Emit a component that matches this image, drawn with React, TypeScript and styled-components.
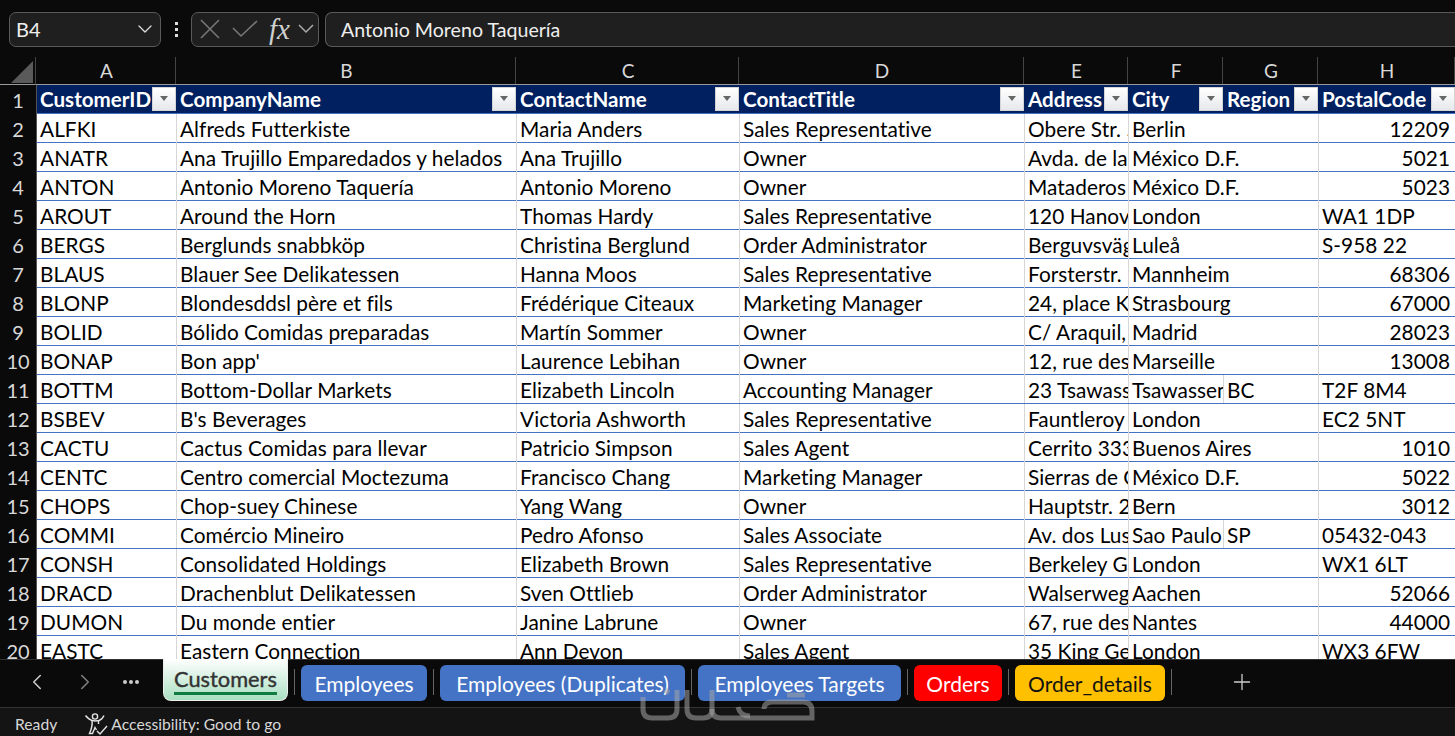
import { createGlobalStyle, styled } from 'styled-components'
import { ChevronDown, ChevronLeft, ChevronRight, Plus } from 'lucide-react'

const COLUMNS = [
	{ letter: 'A', name: 'CustomerID', width: 140 },
	{ letter: 'B', name: 'CompanyName', width: 340 },
	{ letter: 'C', name: 'ContactName', width: 223 },
	{ letter: 'D', name: 'ContactTitle', width: 285 },
	{ letter: 'E', name: 'Address', width: 104 },
	{ letter: 'F', name: 'City', width: 95 },
	{ letter: 'G', name: 'Region', width: 95 },
	{ letter: 'H', name: 'PostalCode', width: 137 },
]

const GRID_COLUMNS = COLUMNS.map((c) => `${c.width}px`).join(' ')

const ROWS = [
	['ALFKI', 'Alfreds Futterkiste', 'Maria Anders', 'Sales Representative', 'Obere Str. 57', 'Berlin', '', '12209'],
	['ANATR', 'Ana Trujillo Emparedados y helados', 'Ana Trujillo', 'Owner', 'Avda. de la Constitución', 'México D.F.', '', '5021'],
	['ANTON', 'Antonio Moreno Taquería', 'Antonio Moreno', 'Owner', 'Mataderos 2312', 'México D.F.', '', '5023'],
	['AROUT', 'Around the Horn', 'Thomas Hardy', 'Sales Representative', '120 Hanover Sq.', 'London', '', 'WA1 1DP'],
	['BERGS', 'Berglunds snabbköp', 'Christina Berglund', 'Order Administrator', 'Berguvsvägen 8', 'Luleå', '', 'S-958 22'],
	['BLAUS', 'Blauer See Delikatessen', 'Hanna Moos', 'Sales Representative', 'Forsterstr. 57', 'Mannheim', '', '68306'],
	['BLONP', 'Blondesddsl père et fils', 'Frédérique Citeaux', 'Marketing Manager', '24, place Kléber', 'Strasbourg', '', '67000'],
	['BOLID', 'Bólido Comidas preparadas', 'Martín Sommer', 'Owner', 'C/ Araquil, 67', 'Madrid', '', '28023'],
	['BONAP', "Bon app'", 'Laurence Lebihan', 'Owner', '12, rue des Bouchers', 'Marseille', '', '13008'],
	['BOTTM', 'Bottom-Dollar Markets', 'Elizabeth Lincoln', 'Accounting Manager', '23 Tsawassen Blvd.', 'Tsawassen', 'BC', 'T2F 8M4'],
	['BSBEV', "B's Beverages", 'Victoria Ashworth', 'Sales Representative', 'Fauntleroy Circus', 'London', '', 'EC2 5NT'],
	['CACTU', 'Cactus Comidas para llevar', 'Patricio Simpson', 'Sales Agent', 'Cerrito 333', 'Buenos Aires', '', '1010'],
	['CENTC', 'Centro comercial Moctezuma', 'Francisco Chang', 'Marketing Manager', 'Sierras de Granada 9993', 'México D.F.', '', '5022'],
	['CHOPS', 'Chop-suey Chinese', 'Yang Wang', 'Owner', 'Hauptstr. 29', 'Bern', '', '3012'],
	['COMMI', 'Comércio Mineiro', 'Pedro Afonso', 'Sales Associate', 'Av. dos Lusíadas, 23', 'Sao Paulo', 'SP', '05432-043'],
	['CONSH', 'Consolidated Holdings', 'Elizabeth Brown', 'Sales Representative', 'Berkeley Gardens', 'London', '', 'WX1 6LT'],
	['DRACD', 'Drachenblut Delikatessen', 'Sven Ottlieb', 'Order Administrator', 'Walserweg 21', 'Aachen', '', '52066'],
	['DUMON', 'Du monde entier', 'Janine Labrune', 'Owner', '67, rue des Cinquante', 'Nantes', '', '44000'],
	['EASTC', 'Eastern Connection', 'Ann Devon', 'Sales Agent', '35 King George', 'London', '', 'WX3 6FW'],
]

const TABS = [
	{ label: 'Employees', color: '#4472c4', ink: '#fff', width: 126 },
	{ label: 'Employees (Duplicates)', color: '#4472c4', ink: '#fff', width: 245 },
	{ label: 'Employees Targets', color: '#4472c4', ink: '#fff', width: 203 },
	{ label: 'Orders', color: '#ff0000', ink: '#fff', width: 88 },
	{ label: 'Order_details', color: '#ffc000', ink: '#111', width: 150 },
]

const isNumeric = (v: string) => /^\d+$/.test(v)

const App = () => (
	<Page>
		<GlobalStyle />
		<FormulaBar>
			<NameBox>
				<span>B4</span>
				<ChevronDown size={24} strokeWidth={1.3} color='#ddd' />
			</NameBox>
			<Grip>
				<i />
				<i />
				<i />
			</Grip>
			<FxBox>
				<svg width='22' height='22' viewBox='0 0 22 22' stroke='#777' strokeWidth='1.6' fill='none'>
					<path d='M2 2L20 20M20 2L2 20' />
				</svg>
				<svg width='26' height='18' viewBox='0 0 26 18' stroke='#777' strokeWidth='1.6' fill='none'>
					<path d='M1 8L9 16L25 1' />
				</svg>
				<FxGlyph>fx</FxGlyph>
				<svg width='18' height='10' viewBox='0 0 18 10' stroke='#aaa' strokeWidth='1.5' fill='none'>
					<path d='M2 1L9 8L16 1' />
				</svg>
			</FxBox>
			<FormulaInput>Antonio Moreno Taquería</FormulaInput>
		</FormulaBar>
		<ColumnHeads>
			<Corner>
				<svg width='22' height='22' viewBox='0 0 22 22'>
					<path d='M22 0V22H0Z' fill='#5a5a5a' />
				</svg>
			</Corner>
			<HeadCells>
				{COLUMNS.map((c) => (
					<HeadCell key={c.letter}>{c.letter}</HeadCell>
				))}
			</HeadCells>
		</ColumnHeads>
		<Sheet>
			<RowNumbers>
				<RowNumber>1</RowNumber>
				{ROWS.map((_, i) => (
					<RowNumber key={i}>{i + 2}</RowNumber>
				))}
			</RowNumbers>
			<Table>
				<TitleRow>
					{COLUMNS.map((c) => (
						<TitleCell key={c.letter}>
							<span>{c.name}</span>
							<FilterButton>
								<svg width='10' height='6' viewBox='0 0 10 6'>
									<path d='M1 0H9L5 5Z' fill='#666' />
								</svg>
							</FilterButton>
						</TitleCell>
					))}
				</TitleRow>
				{ROWS.map((row) => (
					<DataRow key={row[0]}>
						{row.map((v, i) => (
							<DataCell key={i} $right={isNumeric(v)} $spill={v !== '' && row[i + 1] === ''}>
								{v}
							</DataCell>
						))}
					</DataRow>
				))}
			</Table>
		</Sheet>
		<TabBar>
			<TabNav>
				<ChevronLeft size={26} strokeWidth={1.4} color='#ccc' />
				<ChevronRight size={26} strokeWidth={1.4} color='#808080' />
				<NavDots>
					<i />
					<i />
					<i />
				</NavDots>
			</TabNav>
			<ActiveTab>
				<span>Customers</span>
			</ActiveTab>
			{TABS.map((t) => (
				<TabSlot key={t.label}>
					<Separator />
					<ColorTab $color={t.color} $ink={t.ink} $width={t.width}>
						{t.label}
					</ColorTab>
				</TabSlot>
			))}
			<Separator />
			<AddTab>
				<Plus size={26} strokeWidth={1.2} color='#ccc' />
			</AddTab>
		</TabBar>
		<StatusBar>
			<span>Ready</span>
			<StatusItem>
				<svg width='24' height='24' viewBox='0 0 24 24' fill='none' stroke='#e4e4e4' strokeWidth='1.4'>
					<circle cx='11' cy='4.5' r='2.6' />
					<path d='M1.5 3.5C4 6.5 6 8 8 8.5C10 9 13 9 15 8.5C17 8 18.5 6.5 20 3.5' />
					<path d='M8 8.5C8.5 12 8 16 5.5 21.5H8.5L11 15.5L12.5 18' />
					<path d='M14.5 8.8V12' />
					<path d='M13 19L16 22L23 14' />
				</svg>
				<span>Accessibility: Good to go</span>
			</StatusItem>
			<Watermark width='176' height='36' viewBox='0 0 176 36' fill='none' stroke='rgba(165,165,165,0.55)' strokeWidth='5'>
				<path d='M3 10V22Q3 31 12 31H28Q37 31 37 22V3' />
				<path d='M47 3V22Q47 31 56 31H63Q72 31 72 22V3' />
				<path d='M72 22Q72 31 81 31H172V24Q172 15 163 15H133Q124 15 124 22' />
				<path d='M98 20Q100 29 110 29' />
				<path d='M147 8H165' />
				<path d='M25 3L29 6' />
			</Watermark>
		</StatusBar>
	</Page>
)

export default App

const GlobalStyle = createGlobalStyle`
	html, body {
		margin: 0;
		height: 100%;
		background: #0a0a0a;
		overflow: hidden;
	}
	body, button {
		font-family: Lato, "Liberation Sans", sans-serif;
		font-variant-ligatures: none;
	}
	* {
		box-sizing: border-box;
	}
`

const Page = styled.div`
	display: flex;
	flex-direction: column;
	width: 1455px;
	height: 736px;
	overflow: hidden;
	background: #0a0a0a;
`

const FormulaBar = styled.div`
	display: flex;
	align-items: center;
	height: 57px;
	padding: 1px 0 0 9px;
	flex-shrink: 0;
`

const NameBox = styled.div`
	display: flex;
	align-items: center;
	justify-content: space-between;
	width: 152px;
	height: 35px;
	padding: 0 3px 0 6px;
	border: 1px solid #5a5a5a;
	border-radius: 7px;
	background: #1f1f1f;
	color: #eee;
	font-size: 20px;
`

const Grip = styled.div`
	display: flex;
	flex-direction: column;
	gap: 3px;
	width: 30px;
	align-items: center;
	i {
		width: 3px;
		height: 3px;
		background: #ddd;
	}
`

const FxBox = styled.div`
	display: flex;
	align-items: center;
	width: 128px;
	height: 35px;
	padding: 0 2px 0 7px;
	gap: 11px;
	border: 1px solid #5a5a5a;
	border-radius: 7px;
	background: #1f1f1f;
`

const FxGlyph = styled.span`
	width: 22px;
	font-family: 'Liberation Serif', serif;
	font-style: italic;
	font-size: 29px;
	line-height: 30px;
	color: #d0d0d0;
	margin-right: -5px;
`

const FormulaInput = styled.div`
	flex: 1;
	height: 35px;
	margin-left: 6px;
	padding-left: 15px;
	border: 1px solid #5a5a5a;
	border-right: 0;
	border-radius: 7px 0 0 7px;
	background: #1f1f1f;
	color: #eee;
	font-size: 19.6px;
	line-height: 33px;
`

const ColumnHeads = styled.div`
	display: flex;
	height: 28px;
	flex-shrink: 0;
`

const Corner = styled.div`
	display: flex;
	align-items: flex-end;
	justify-content: flex-end;
	width: 37px;
	padding: 0 2px 1px 0;
	border-right: 1px solid #444;
	border-bottom: 1px solid #9a9a9a;
`

const HeadCells = styled.div`
	display: grid;
	grid-template-columns: ${GRID_COLUMNS};
	border-bottom: 1px solid #9a9a9a;
`

const HeadCell = styled.div`
	display: flex;
	align-items: center;
	justify-content: center;
	padding-left: 2px;
	border-right: 1px solid #444;
	color: #d8d8d8;
	font-size: 19px;
`

const Sheet = styled.div`
	display: flex;
	flex: 1;
	min-height: 0;
	overflow: hidden;
`

const RowNumbers = styled.div`
	width: 37px;
	flex-shrink: 0;
	border-right: 1px solid #555;
`

const RowNumber = styled.div`
	display: flex;
	align-items: center;
	justify-content: center;
	height: 29px;
	padding-top: 1px;
	color: #d8d8d8;
	font-size: 20px;
`

const Table = styled.div`
	flex: 1;
	background: #fff;
`

const TitleRow = styled.div`
	display: grid;
	grid-template-columns: ${GRID_COLUMNS};
	height: 29px;
	background: #002060;
	border-bottom: 1px solid #4472c4;
`

const TitleCell = styled.div`
	display: flex;
	align-items: center;
	justify-content: space-between;
	min-width: 0;
	padding-left: 3px;
	color: #fff;
	font-size: 20.6px;
	font-weight: 700;
	span {
		flex: 1;
		min-width: 0;
		overflow: hidden;
		white-space: nowrap;
	}
`

const FilterButton = styled.div`
	display: flex;
	align-items: center;
	justify-content: center;
	flex-shrink: 0;
	width: 24px;
	height: 24px;
	margin-right: 1px;
	border: 1px solid #d4d4d4;
	background: linear-gradient(#ffffff, #e6e8ec);
`

const DataRow = styled.div`
	display: grid;
	grid-template-columns: ${GRID_COLUMNS};
	height: 29px;
	border-bottom: 1px solid #4472c4;
`

/* Excel lets text run over an empty neighbour, and hides the gridline under it */
const DataCell = styled.div<{ $right?: boolean; $spill?: boolean }>`
	min-width: 0;
	padding: 0 ${({ $right }) => ($right ? '5px' : '3px')} 0 3px;
	overflow: ${({ $spill }) => ($spill ? 'visible' : 'hidden')};
	border-right: ${({ $spill }) => ($spill ? '0' : '1px solid #d6d6d6')};
	color: #000;
	font-size: 20.8px;
	line-height: 29px;
	letter-spacing: 0.05px;
	text-align: ${({ $right }) => ($right ? 'right' : 'left')};
	white-space: nowrap;
`

const TabBar = styled.div`
	display: flex;
	align-items: flex-start;
	height: 49px;
	flex-shrink: 0;
	border-top: 1px solid #333;
	border-bottom: 1px solid #333;
	background: #0a0a0a;
`

const TabNav = styled.div`
	display: flex;
	align-items: center;
	gap: 22px;
	width: 163px;
	height: 44px;
	padding-left: 24px;
`

const NavDots = styled.div`
	display: flex;
	gap: 2px;
	margin-left: 3px;
	i {
		width: 4px;
		height: 4px;
		border-radius: 50%;
		background: #ccc;
	}
`

const ActiveTab = styled.div`
	display: flex;
	justify-content: center;
	width: 125px;
	height: 42px;
	margin-top: -1px;
	padding-top: 3px;
	border: 1px solid #eee;
	border-top: 0;
	border-radius: 0 0 8px 8px;
	background: linear-gradient(#ffffff, #a9dfc1);
	color: #333;
	font-size: 21.8px;
	-webkit-text-stroke: 0.4px #333;
	span {
		height: 33px;
		border-bottom: 3px solid #107c41;
		line-height: 33px;
	}
`

const TabSlot = styled.div`
	display: flex;
	align-items: flex-start;
`

const Separator = styled.div`
	width: 1px;
	height: 26px;
	margin: 9px 6px 0;
	background: #666;
`

const ColorTab = styled.div<{ $color: string; $ink: string; $width: number }>`
	width: ${({ $width }) => $width}px;
	height: 36px;
	margin-top: 5px;
	border-radius: 6px;
	background: ${({ $color }) => $color};
	color: ${({ $ink }) => $ink};
	font-size: 21px;
	line-height: 38px;
	text-align: center;
`

const AddTab = styled.div`
	display: flex;
	justify-content: center;
	width: 128px;
	padding-top: 9px;
`

const StatusBar = styled.div`
	position: relative;
	display: flex;
	align-items: center;
	gap: 27px;
	height: 28px;
	flex-shrink: 0;
	padding: 4px 0 0 15px;
	background: #141414;
	color: #d8d8d8;
	font-size: 15.7px;
`

const StatusItem = styled.div`
	display: flex;
	align-items: center;
	gap: 3px;
`

const Watermark = styled.svg`
	position: absolute;
	left: 640px;
	top: -21px;
`
